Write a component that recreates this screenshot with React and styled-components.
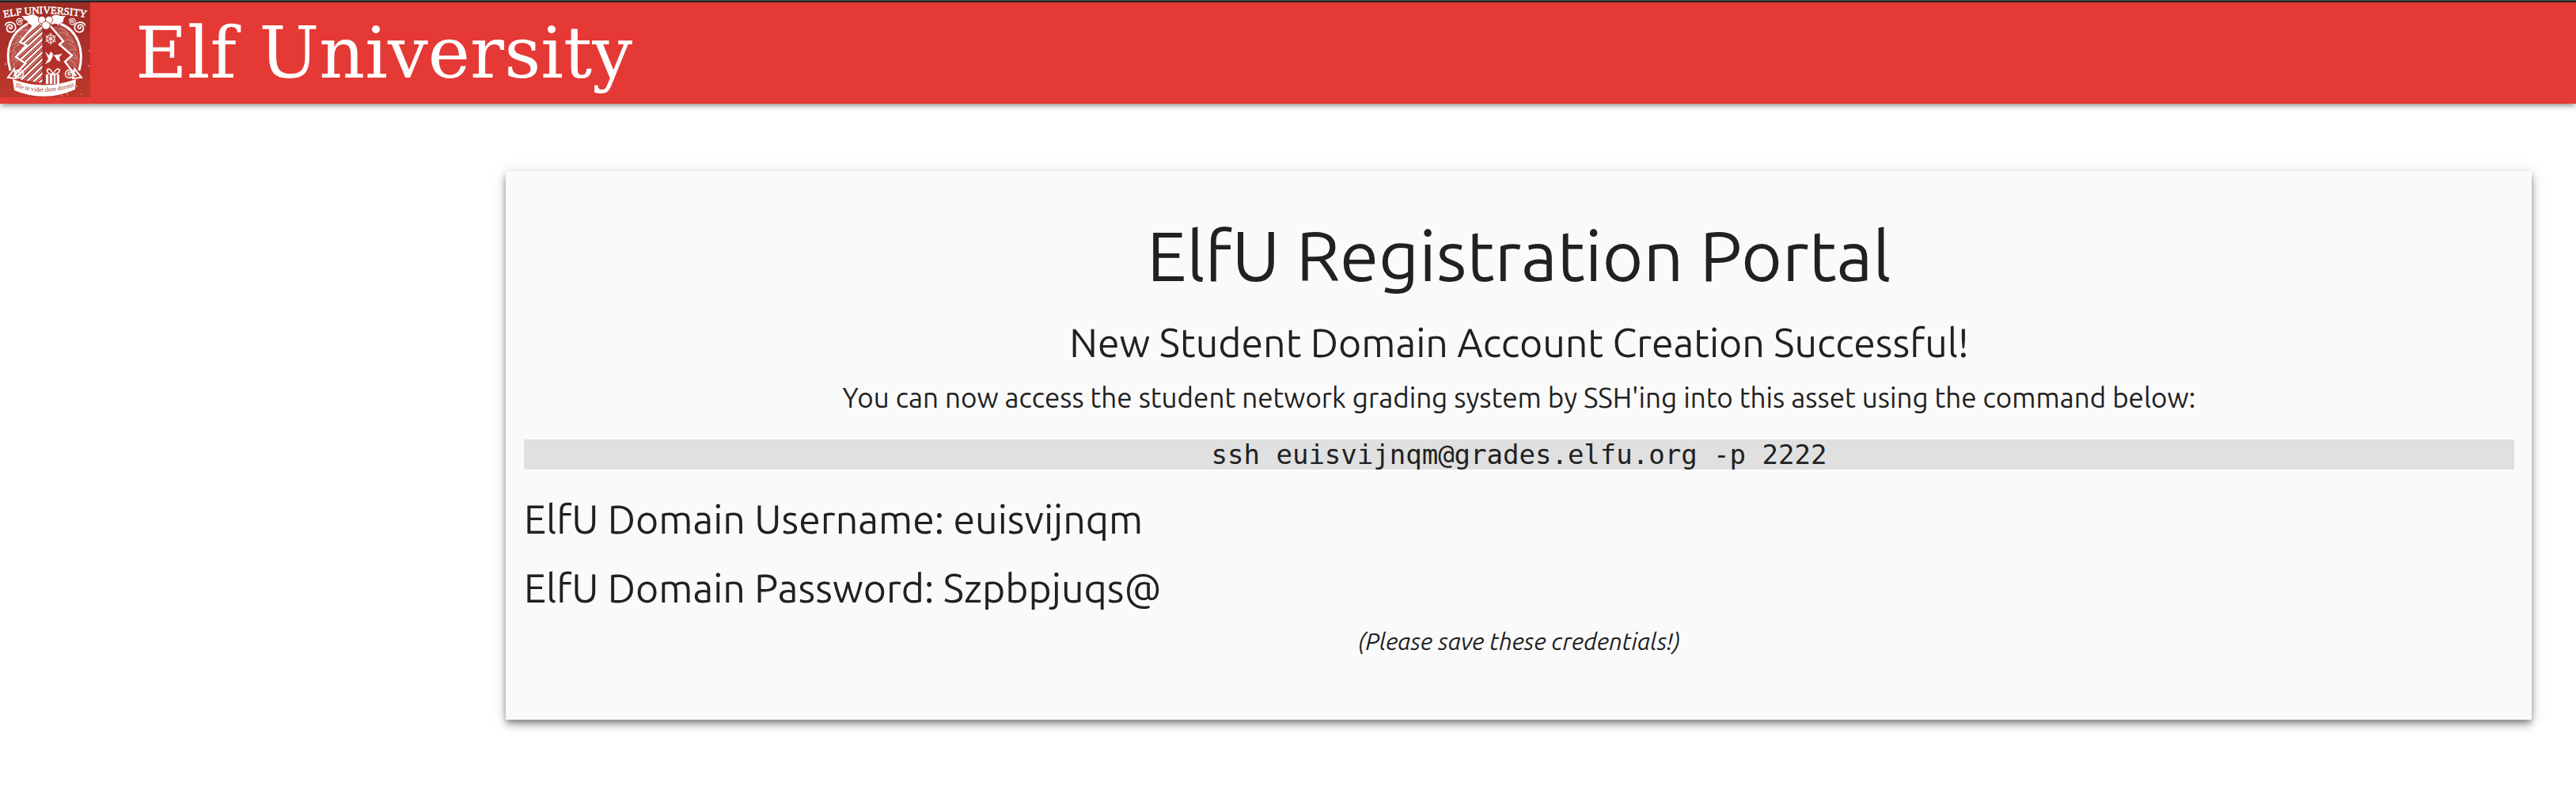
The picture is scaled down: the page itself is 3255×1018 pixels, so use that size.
import React from "react";
import styled, { createGlobalStyle } from "styled-components";

const GlobalStyle = createGlobalStyle`
  * {
    box-sizing: border-box;
  }
  body {
    margin: 0;
    border-top: 1px solid #4f504e;
    background: #ffffff;
    color: #212121;
    font-family: "Ubuntu", "Noto Sans", sans-serif;
  }
`;

const Header = styled.header`
  display: flex;
  align-items: flex-start;
  gap: 57px;
  height: 130px;
  background: #e53935;
  border-top: 2px solid #252525;
  box-shadow:
    0 4px 4px rgba(0, 0, 0, 0.14),
    0 6px 2px -4px rgba(0, 0, 0, 0.12),
    0 2px 10px rgba(0, 0, 0, 0.2);
`;

const HomeLink = styled.a`
  display: block;
  line-height: 0;
`;

const Brand = styled.span`
  color: #ffffff;
  font-family: "DejaVu Serif", serif;
  font-size: 90px;
  line-height: 128px;
  white-space: nowrap;
`;

const Main = styled.main`
  padding: 85px 56px 100px 639px;
`;

const Card = styled.section`
  padding: 58px 22px 75px 23px;
  background: #fafafa;
  text-align: center;
  box-shadow:
    0 8px 10px rgba(0, 0, 0, 0.14),
    0 2px 20px rgba(0, 0, 0, 0.12),
    0 4px 8px -1px rgba(0, 0, 0, 0.4);
`;

const Title = styled.h1`
  margin: 0 0 34px;
  font-size: 89px;
  font-weight: 400;
  line-height: 96px;
`;

const Subtitle = styled.h2`
  margin: 0 0 18px;
  font-size: 50px;
  font-weight: 400;
  line-height: 56px;
`;

const Lead = styled.p`
  margin: 0 0 29px;
  font-size: 35px;
  line-height: 48px;
`;

const Command = styled.code`
  display: block;
  margin: 0 0 34px;
  background: #e0e0e0;
  font-family: "DejaVu Sans Mono", monospace;
  font-size: 34px;
  line-height: 38px;
`;

const Credentials = styled.div`
  display: grid;
  gap: 31px;
  margin: 0 0 16px;
  text-align: left;
`;

const Credential = styled(Subtitle)`
  margin: 0;
`;

const Note = styled.em`
  display: block;
  font-size: 30px;
  line-height: 48px;
`;

const Swirl = ({ x, y, r, flip }) => (
  <g transform={`translate(${x} ${y}) scale(${flip ? -r : r} ${r})`}>
    <path
      d="M8 -3 C5 -9 -5 -9 -8 -2 C-10 5 -4 9 1 8 C6 7 7 1 4 -2 C1 -5 -4 -3 -3 1 C-2 4 2 3 1 0"
      fill="none"
      stroke="#fff"
      strokeWidth="2.2"
      strokeLinecap="round"
    />
  </g>
);

const Crest = () => (
  <svg width="114" height="120" viewBox="0 0 114 120" role="img" aria-label="Elf University crest">
    <defs>
      <linearGradient id="ground" x1="0" y1="0" x2="0" y2="1">
        <stop offset="0" stopColor="#9c2c25" />
        <stop offset="0.6" stopColor="#b2302a" />
        <stop offset="1" stopColor="#bd392c" />
      </linearGradient>
      <clipPath id="treeLeft">
        <path d="M54 20 L42 30 L25 50 L33 54 L20 69 L32 77 L17 96 L54 102 Z" />
      </clipPath>
      <path id="nameArc" d="M1 20 Q24 15 57 14 Q90 15 113 20" />
      <path id="mottoArc" d="M19 107 Q55 119 94 106" />
    </defs>
    <rect width="114" height="120" fill="url(#ground)" />

    <g fill="#c4766f" fillOpacity="0.5">
      <path d="M34 29 C18 38 8 58 15 86 L29 78 L20 69 L33 54 L25 50 L42 30 Z" />
      <path d="M74 29 C94 36 104 58 98 86 L83 76 L91 67 L75 53 L79 49 L65 32 Z" />
    </g>
    <g fill="none" stroke="#e9c4c0" strokeWidth="0.7" opacity="0.8">
      <path d="M18 46 q5 -6 10 -2 q-6 1 -8 7 M15 54 q6 -5 9 0 q-6 0 -7 7 M13 63 q4 -4 7 0 q-4 2 -5 7 M14 73 q5 -3 8 1 q-5 1 -5 7 M24 38 q6 -6 11 -3 q-7 1 -9 8" />
      <path d="M76 33 q8 1 10 8 q-6 -5 -11 -2 M83 41 q8 3 9 10 q-5 -6 -10 -3 M87 52 q8 2 9 9 q-5 -4 -8 0 M92 64 q5 2 5 8 q-4 -4 -7 0 M88 73 q6 1 7 7" />
    </g>
    <path d="M35 27 C15 37 5 58 13 86" fill="none" stroke="#fff" strokeWidth="3" />
    <path d="M76 27 C98 35 107 60 100 86" fill="none" stroke="#fff" strokeWidth="3" />

    <g clipPath="url(#treeLeft)">
      <rect x="10" y="20" width="44" height="85" fill="#a92e27" />
      <g stroke="#fff" strokeWidth="2.4">
        <path d="M10 60 L64 14 M10 69 L64 22 M10 78 L64 29 M10 87 L64 37 M10 96 L64 45 M10 105 L64 53 M10 114 L64 62 M16 117 L64 71 M24 117 L64 80 M32 117 L64 89" />
      </g>
      <g stroke="#fff" strokeWidth="0.8">
        <path d="M10 64 L64 18 M10 73 L64 25 M10 82 L64 33 M10 91 L64 41 M10 100 L64 49 M10 109 L64 57 M12 117 L64 66 M20 117 L64 75 M28 117 L64 84" />
      </g>
    </g>
    <g fill="none" stroke="#fff" strokeWidth="2.4" strokeLinejoin="miter">
      <path d="M44 28 L25 50 L33 54 L20 69 L32 77 L17 93" />
      <path d="M62 28 L80 49 L75 53 L91 67 L82 75 L96 93" />
      <path d="M54 28 V100" stroke="#8f2620" strokeWidth="1" />
    </g>
    <path d="M18 84 L10 95 L20 96 Z M94 84 L103 95 L92 96 Z" fill="none" stroke="#fff" strokeWidth="2" />

    <g fill="#fff">
      <path d="M27 17 Q34 18 38 16 Q42 14 48 18 L55 23 L54 29 Q50 26 47 29 Q44 27 40 31 Q40 27 35 27 Q36 23 31 22 Q30 19 27 17 Z" />
      <path d="M83 17 Q77 18 73 16 Q68 15 64 19 L58 23 L60 29 Q64 26 67 28 Q70 25 74 29 Q75 25 80 25 Q79 21 83 17 Z" />
      <g stroke="#a62e27" strokeWidth="0.9">
        <circle cx="53" cy="22" r="4.6" />
        <circle cx="62" cy="22" r="4.6" />
        <circle cx="58" cy="29" r="5.2" />
      </g>
    </g>

    <Swirl x={13} y={31} r={0.8} flip />
    <Swirl x={101} y={31} r={0.8} />
    <Swirl x={25} y={24} r={0.5} />
    <Swirl x={91} y={24} r={0.5} flip />
    <Swirl x={24} y={90} r={0.65} flip />
    <Swirl x={88} y={90} r={0.65} />

    <g transform="translate(64 46)" stroke="#f1d5d2" fill="none">
      <circle r="5" strokeWidth="1.6" />
      <circle r="1.6" strokeWidth="1" />
      <path d="M0 -7.5 V7.5 M-6.5 -3.8 L6.5 3.8 M-6.5 3.8 L6.5 -3.8" strokeWidth="1.3" />
    </g>

    <g fill="#fff">
      <path d="M57 62 L62 67 L64 62 L67 65 L66 70 L63 75 L57 78 L61 71 Z" />
      <path d="M67 67 L72 66 L79 65 L75 69 L76 75 L72 73 L70 69 Z" />
    </g>

    <g fill="#fff">
      <path d="M58 91 H75 V103 H58 Z" />
      <path d="M62 91 V103 M67 91 V103 M71 91 V103" stroke="#a92e27" strokeWidth="1.6" />
      <path
        d="M67 91 C60 91 58 86 61 84 C64 84 66 88 67 91 C69 86 73 82 75 85 C76 89 71 91 67 91 Z"
        fill="none"
        stroke="#fff"
        strokeWidth="1.6"
      />
    </g>

    <path d="M16 97 Q55 112 96 97 L95 110 Q56 127 18 111 Z" fill="#fff" />
    <text fill="#fff" stroke="#fff" strokeWidth="0.5" fontFamily="'Liberation Serif', serif" fontSize="13">
      <textPath href="#nameArc" startOffset="50%" textAnchor="middle">
        ELF UNIVERSITY
      </textPath>
    </text>
    <text fill="#a3352d" fontFamily="'Liberation Serif', serif" fontSize="8">
      <textPath href="#mottoArc" startOffset="50%" textAnchor="middle">
        Ille te videt dum dormit
      </textPath>
    </text>
    <g fill="#fff">
      <circle cx="7" cy="78" r="0.8" />
      <circle cx="113" cy="61" r="0.7" />
      <circle cx="112" cy="80" r="0.7" />
      <circle cx="97" cy="106" r="0.7" />
      <circle cx="78" cy="118" r="0.7" />
      <circle cx="85" cy="116" r="0.7" />
      <circle cx="103" cy="116" r="0.6" />
    </g>
    <g fill="#a32a68">
      <circle cx="25" cy="17" r="1.3" />
      <circle cx="4" cy="34" r="1.3" />
    </g>
  </svg>
);

export default function App() {
  return (
    <>
      <GlobalStyle />
      <Header>
        <HomeLink href="#" aria-label="Elf University home">
          <Crest />
        </HomeLink>
        <Brand>Elf University</Brand>
      </Header>
      <Main>
        <Card>
          <Title>ElfU Registration Portal</Title>
          <Subtitle>New Student Domain Account Creation Successful!</Subtitle>
          <Lead>
            You can now access the student network grading system by SSH'ing into this asset using the
            command below:
          </Lead>
          <Command>ssh euisvijnqm@grades.elfu.org -p 2222</Command>
          <Credentials>
            <Credential>ElfU Domain Username: euisvijnqm</Credential>
            <Credential>ElfU Domain Password: Szpbpjuqs@</Credential>
          </Credentials>
          <Note>(Please save these credentials!)</Note>
        </Card>
      </Main>
    </>
  );
}
